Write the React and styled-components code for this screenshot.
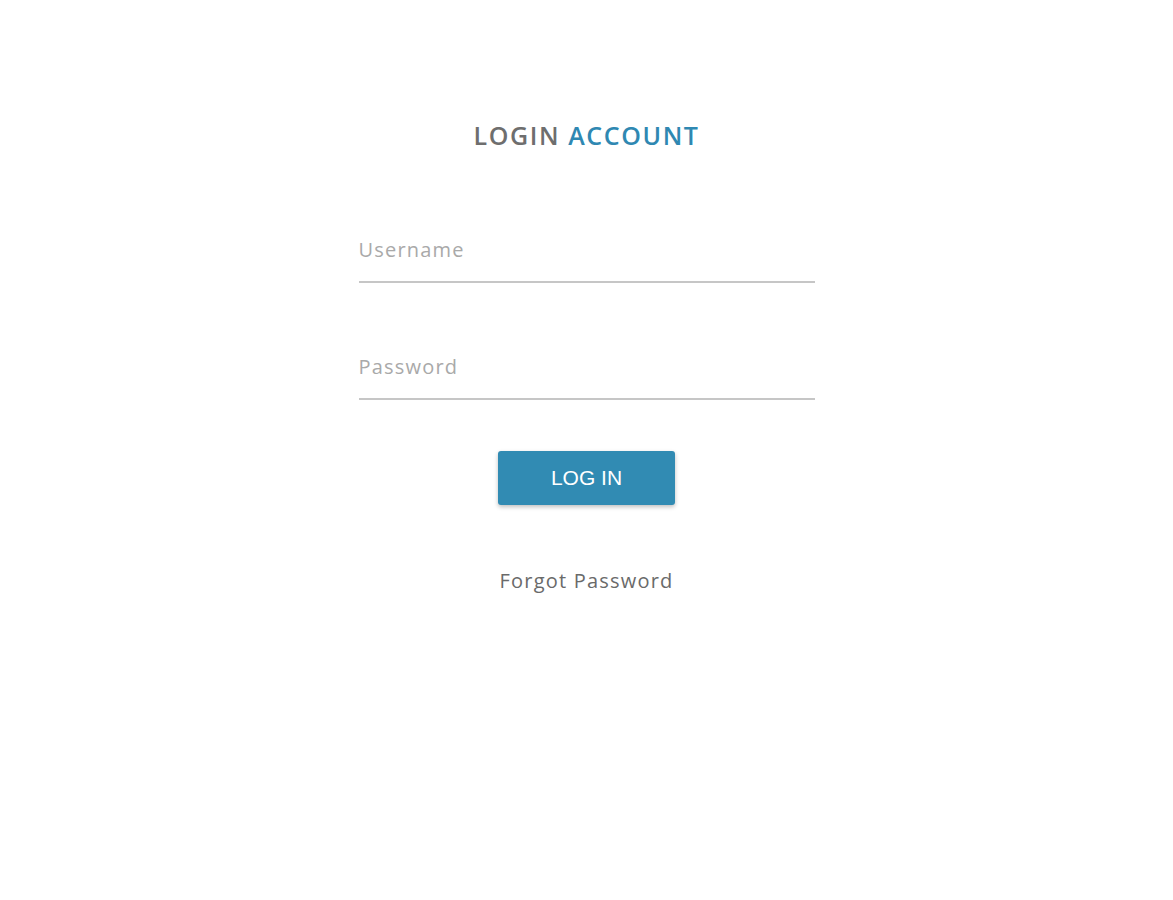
import React from 'react';
import styled, { createGlobalStyle } from 'styled-components';

const GlobalStyle = createGlobalStyle`
  body {
    margin: 0;
    background: #ffffff;
    font-family: "Open Sans", "Liberation Sans", sans-serif;
  }
`;

const Page = styled.div`
  display: flex;
  flex-direction: column;
  align-items: center;
  padding-top: 120px;
  min-height: 900px;
  box-sizing: border-box;
`;

const Title = styled.h1`
  margin: 0;
  font-size: 25px;
  line-height: 30px;
  font-weight: 600;
  color: #6e6e6e;
  letter-spacing: 1.6px;
`;

const Accent = styled.span`
  color: #2f88b2;
`;

const Form = styled.form`
  width: 456px;
  margin-top: 79px;
  display: flex;
  flex-direction: column;
  align-items: center;
`;

const Field = styled.input`
  width: 100%;
  height: 54px;
  box-sizing: border-box;
  padding: 0 0 12px 0;
  margin-bottom: ${p => p.$gap || 0}px;
  border: none;
  border-bottom: 2px solid #c6c6c6;
  outline: none;
  background: transparent;
  font-family: inherit;
  font-size: 20px;
  letter-spacing: 1.2px;
  color: #555;

  &::placeholder {
    color: #a9a9a9;
  }
`;

const Button = styled.button`
  margin-top: 51px;
  width: 177px;
  height: 54px;
  border: none;
  border-radius: 3px;
  background: #318bb3;
  color: #ffffff;
  font-family: "Liberation Sans", Arial, sans-serif;
  font-size: 21px;
  box-shadow: 0 2px 4px rgba(0, 0, 0, 0.25);
  cursor: pointer;
`;

const Link = styled.a`
  margin-top: 64px;
  font-size: 20px;
  line-height: 24px;
  letter-spacing: 1.2px;
  color: #6a6a6a;
  text-decoration: none;
  cursor: pointer;
`;

export default function App() {
  return (
    <Page>
      <GlobalStyle />
      <Title>
        LOGIN <Accent>ACCOUNT</Accent>
      </Title>
      <Form onSubmit={e => e.preventDefault()}>
        <Field type="text" placeholder="Username" $gap={63} />
        <Field type="password" placeholder="Password" />
        <Button type="submit">LOG IN</Button>
        <Link>Forgot Password</Link>
      </Form>
    </Page>
  );
}
